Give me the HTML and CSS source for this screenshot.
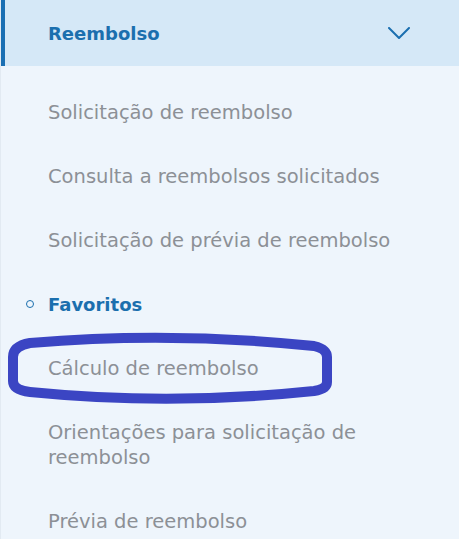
FILE: index.html
```html
<!DOCTYPE html>
<html lang="pt-BR">
<head>
<meta charset="utf-8">
<title>Reembolso</title>
<link rel="stylesheet" href="styles.css">
</head>
<body>
<nav class="menu">
  <div class="menu-header">
    <span class="menu-title">Reembolso</span>
    <svg class="chevron" width="22" height="12" viewBox="0 0 22 12" aria-hidden="true">
      <path d="M1 1 L11 11 L21 1" fill="none" stroke="#1b6fb0" stroke-width="2" stroke-linecap="round" stroke-linejoin="round"/>
    </svg>
  </div>
  <ul class="items">
    <li class="item">Solicitação de reembolso</li>
    <li class="item">Consulta a reembolsos solicitados</li>
    <li class="item">Solicitação de prévia de reembolso</li>
    <li class="item fav"><span class="ring"></span>Favoritos</li>
    <li class="item">Cálculo de reembolso</li>
    <li class="item">Orientações para solicitação de reembolso</li>
    <li class="item">Prévia de reembolso</li>
  </ul>
</nav>
<svg class="annotation" width="463" height="539" viewBox="0 0 463 539" aria-hidden="true">
  <path d="M 13,357 Q 13,346 30,343 Q 170,331 314,346 Q 327,349 327,357 L 327,382 Q 327,389 314,391 Q 170,406 30,392 Q 13,390 13,381 Z" fill="none" stroke="#3b45c3" stroke-width="10" stroke-linejoin="round"/>
</svg>
</body>
</html>
```

FILE: styles.css
```css
html, body {
  margin: 0;
  padding: 0;
  background: #ffffff;
}

body {
  width: 463px;
  height: 539px;
  overflow: hidden;
  position: relative;
  font-family: "DejaVu Sans", "Noto Sans", sans-serif;
}

.menu {
  width: 458px;
  height: 539px;
  background: #eef5fc;
  border-left: 1px solid #e2eaf2;
  overflow: hidden;
}

.menu-header {
  height: 66px;
  background: #d5e8f7;
  border-left: 4px solid #1a6fb3;
  display: flex;
  align-items: center;
  justify-content: space-between;
  padding: 0 49px 0 43px;
}

.menu-title {
  color: #1b6fae;
  font-size: 18px;
  font-weight: 700;
}

.chevron {
  display: block;
}

.items {
  list-style: none;
  margin: 0;
  padding: 14px 0 0 0;
}

.item {
  padding: 19.5px 40px 19.5px 47px;
  font-size: 19.5px;
  line-height: 25px;
  color: #8c9096;
}

.item.fav {
  display: flex;
  align-items: center;
  padding-left: 25px;
  color: #1b6fae;
  font-weight: 700;
  font-size: 18px;
}

.ring {
  width: 6px;
  height: 6px;
  border: 1.5px solid #1b6fae;
  border-radius: 50%;
  margin-right: 14px;
  flex: none;
}

.annotation {
  position: absolute;
  left: 0;
  top: 0;
  pointer-events: none;
}
```
